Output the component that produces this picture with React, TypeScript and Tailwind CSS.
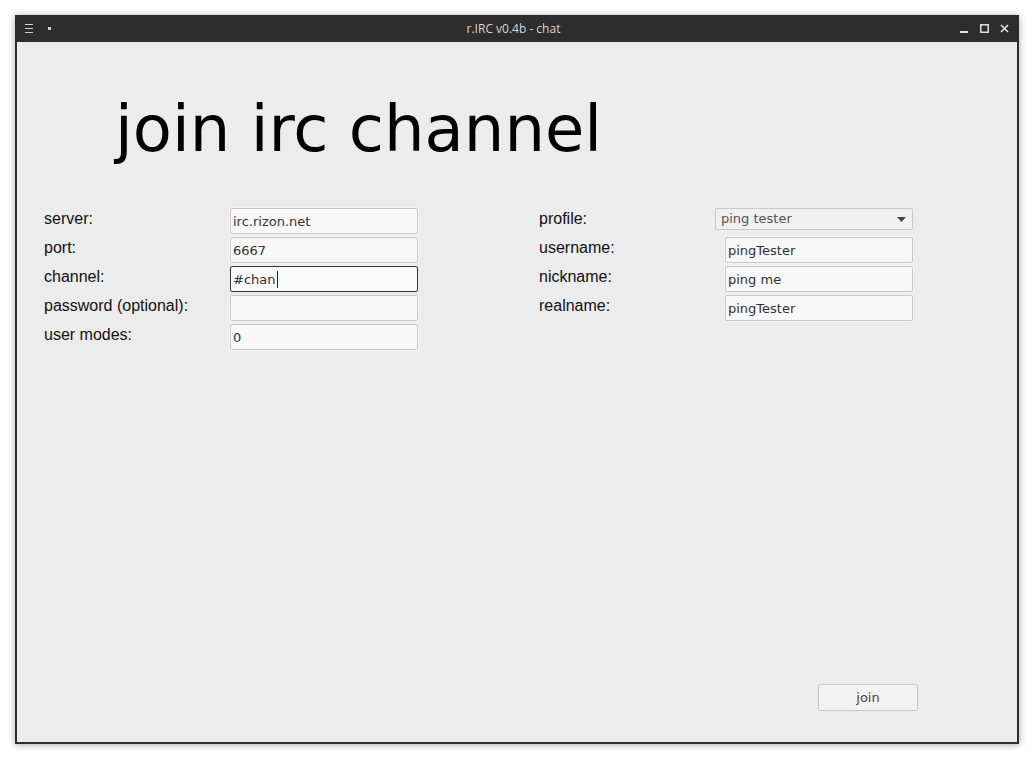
import React from "react"

const sans = { fontFamily: "'Liberation Sans', Arial, sans-serif" }

type FieldProps = {
  label: string
  value?: string
  focused?: boolean
}

function LeftRow({ label, value, focused }: FieldProps) {
  return (
    <div className="flex h-[26px] items-start">
      <div className="w-[186px] pt-[2px] text-[16px] leading-[18px] text-[#111] font-['Liberation_Sans',Arial,sans-serif]">
        {label}
      </div>
      <Box value={value} focused={focused} />
    </div>
  )
}

function Box({ value, focused }: { value?: string; focused?: boolean }) {
  return (
    <div
      className={
        focused
          ? "flex h-[26px] w-[188px] items-center rounded-[2px] border border-[#333] bg-[#fafafa] pl-[2px] pt-[1px] text-[13px] text-[#333] font-['DejaVu_Sans',sans-serif]"
          : "flex h-[26px] w-[188px] items-center rounded-[2px] border border-[#c6c6c6] bg-[#f8f8f8] pl-[2px] pt-[1px] text-[13px] text-[#333] shadow-[0_0_0_1px_#f4f4f4] font-['DejaVu_Sans',sans-serif]"
      }
    >
      <span>{value}</span>
      {focused && <span className="ml-[1px] h-[17px] w-px bg-[#222]" />}
    </div>
  )
}

function RightRow({ label, value }: FieldProps) {
  return (
    <div className="flex h-[26px] items-start">
      <div className="w-[186px] pt-[2px] text-[16px] leading-[18px] text-[#111] font-['Liberation_Sans',Arial,sans-serif]">
        {label}
      </div>
      <Box value={value} />
    </div>
  )
}

export default function App() {
  return (
    <div className="min-h-[759px] w-[1034px] bg-white pt-[15px] pl-[15px]">
      <div className="flex h-[729px] w-[1004px] flex-col bg-[#2d2d2d] shadow-[0_1px_7px_rgba(0,0,0,0.35)]">
        {/* title bar */}
        <div className="relative flex h-[27px] items-center text-[#d8d8d8]">
          <svg width="8" height="9" viewBox="0 0 8 9" className="ml-[10px]">
            <rect x="0" y="0" width="8" height="1" fill="#d0d0d0" />
            <rect x="0" y="4" width="8" height="1" fill="#d0d0d0" />
            <rect x="0" y="8" width="8" height="1" fill="#d0d0d0" />
          </svg>
          <div className="ml-[15px] h-[3px] w-[3px] bg-[#d0d0d0]" />
          <div className="flex-1 pl-[16px] text-center text-[12px] font-['Open_Sans',sans-serif] text-[#d6d6d6]">
            r.IRC v0.4b - chat
          </div>
          <div className="mr-[10px] flex items-center gap-[11px]">
            <svg width="9" height="9" viewBox="0 0 9 9">
              <rect x="0" y="7" width="8" height="2" fill="#e0e0e0" />
            </svg>
            <svg width="9" height="9" viewBox="0 0 9 9">
              <rect x="0.75" y="0.75" width="7.5" height="7.5" fill="none" stroke="#e0e0e0" strokeWidth="1.5" />
            </svg>
            <svg width="9" height="9" viewBox="0 0 9 9">
              <path d="M1 1 L8 8 M8 1 L1 8" stroke="#e0e0e0" strokeWidth="1.6" />
            </svg>
          </div>
        </div>

        {/* client area */}
        <div className="mx-[2px] mb-[2px] flex flex-1 flex-col bg-[#ececec]">
          <h1 className="mt-[55px] pl-[98px] text-[64px] leading-[64px] text-black font-['DejaVu_Sans',sans-serif]">
            join irc channel
          </h1>

          <div className="mt-[47px] flex pl-[27px]">
            <div className="flex w-[495px] flex-col gap-[3px]">
              <LeftRow label="server:" value="irc.rizon.net" />
              <LeftRow label="port:" value="6667" />
              <LeftRow label="channel:" value="#chan" focused />
              <LeftRow label="password (optional):" value="" />
              <LeftRow label="user modes:" value="0" />
            </div>

            <div className="flex flex-col gap-[3px]">
              <div className="flex h-[26px] items-start">
                <div className="w-[176px] pt-[2px] text-[16px] leading-[18px] text-[#111]" style={sans}>
                  profile:
                </div>
                <div className="flex h-[22px] w-[198px] items-center justify-between rounded-[2px] border border-[#c8c8c8] bg-[#f0f0f0] pl-[5px] pr-[6px] text-[13px] text-[#555] font-['DejaVu_Sans',sans-serif]">
                  <span>ping tester</span>
                  <svg width="9" height="5" viewBox="0 0 9 5">
                    <path d="M0 0 L9 0 L4.5 5 Z" fill="#444" />
                  </svg>
                </div>
              </div>
              <RightRow label="username:" value="pingTester" />
              <RightRow label="nickname:" value="ping me" />
              <RightRow label="realname:" value="pingTester" />
            </div>
          </div>

          <div className="flex-1" />

          <div className="flex justify-end pr-[99px] pb-[31px]">
            <button className="h-[27px] w-[100px] rounded-[2px] border border-[#c8c8c8] bg-[#f2f2f2] text-[13px] text-[#444] font-['DejaVu_Sans',sans-serif]">
              join
            </button>
          </div>
        </div>
      </div>
    </div>
  )
}
